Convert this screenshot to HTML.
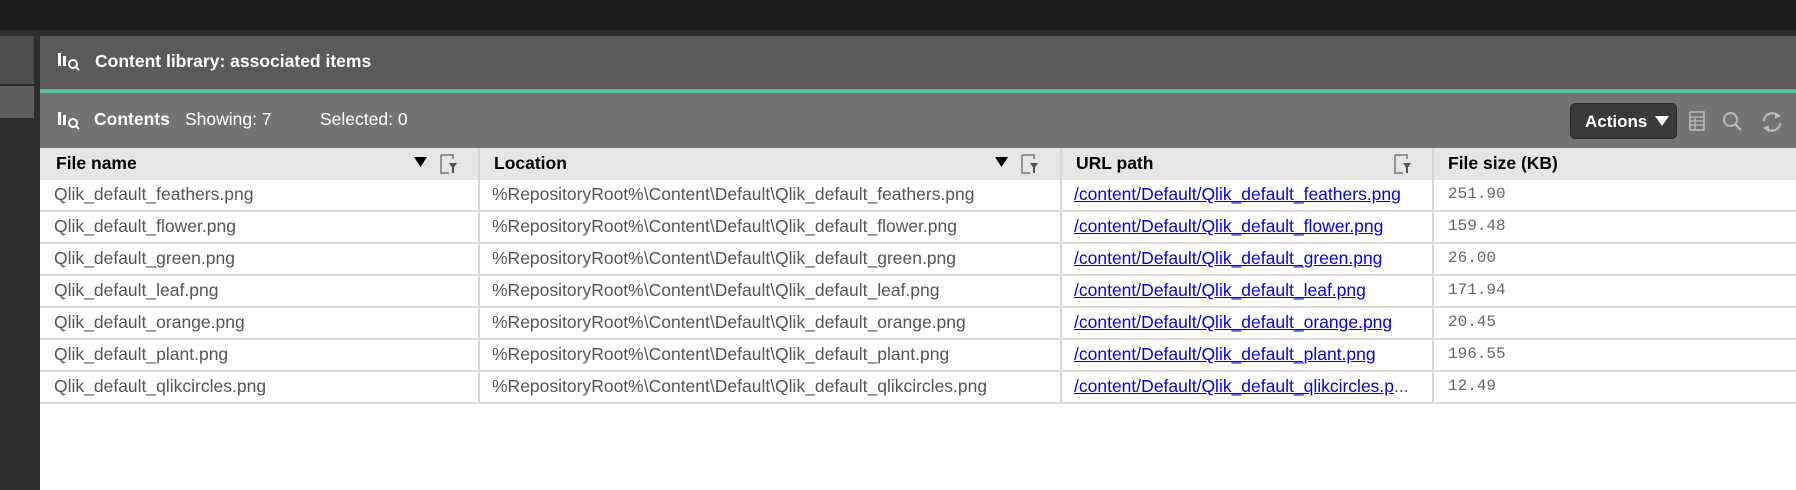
<!DOCTYPE html>
<html><head><style>
*{margin:0;padding:0;box-sizing:border-box}
body{width:1796px;height:490px;overflow:hidden;background:#2e2e2e;font-family:"Liberation Sans",sans-serif;position:relative}
.top{position:absolute;left:0;top:0;width:1796px;height:30px;background:#1b1b1b}
.lb1{position:absolute;left:0;top:36px;width:34px;height:48px;background:#4e4e4e}
.lb2{position:absolute;left:0;top:86px;width:34px;height:32px;background:#5e5e5e}
.main{position:absolute;left:40px;top:36px;width:1756px;height:454px;background:#fff}
.h1{position:absolute;left:0;top:0;width:100%;height:53px;background:#5a5a5a;color:#fff;font-weight:bold;font-size:17.5px}
.teal{position:absolute;left:0;top:53px;width:100%;height:4px;background:#5fbf9f}
.h2{position:absolute;left:0;top:57px;width:100%;height:55px;background:#737373;color:#fff;font-size:17.5px}
.ico{position:absolute}
.t{position:absolute;white-space:nowrap}
.thead{position:absolute;left:0;top:112px;width:100%;height:32px;background:#e6e6e6}
.col{position:absolute;top:112px;bottom:0;width:2px;background:#d8d8d8}
.row{position:absolute;left:0;width:100%;height:32px;border-bottom:2px solid #dcdcdc}
.c{position:absolute;top:4px;font-size:17.5px;color:#555;white-space:nowrap}
a{color:#0000ee;text-decoration:underline}
.mono{font-family:"Liberation Mono",monospace;font-size:16px;top:5px;color:#666}
.hd{position:absolute;top:5px;font-weight:bold;font-size:17.5px;color:#000}
.fi{position:absolute;top:6px;width:18px;height:20px}
.act{position:absolute;left:1530px;top:67px;width:107px;height:36px;background:#3a3a3a;border:1px solid #2a2a2a;border-radius:5px;color:#fff;font-weight:bold;font-size:17px}
</style></head><body>
<div class="top"></div>
<div class="lb1"></div><div class="lb2"></div>
<div class="main">
 <div class="h1">
  <svg class="ico" style="left:17px;top:15px" width="24" height="20"><rect x="1" y="2" width="3" height="13" fill="#fff"/><rect x="6" y="5" width="3" height="10" fill="#fff"/><circle cx="16" cy="13" r="4" fill="none" stroke="#fff" stroke-width="2"/><line x1="19" y1="16" x2="22" y2="19" stroke="#fff" stroke-width="2"/></svg>
  <div class="t" style="left:55px;top:15px">Content library: associated items</div>
 </div>
 <div class="teal"></div>
 <div class="h2">
  <svg class="ico" style="left:17px;top:17px" width="24" height="20"><rect x="1" y="2" width="3" height="13" fill="#fff"/><rect x="6" y="5" width="3" height="10" fill="#fff"/><circle cx="16" cy="13" r="4" fill="none" stroke="#fff" stroke-width="2"/><line x1="19" y1="16" x2="22" y2="19" stroke="#fff" stroke-width="2"/></svg>
  <div class="t" style="left:54px;top:16px;font-weight:bold">Contents</div>
  <div class="t" style="left:145px;top:16px">Showing: 7</div>
  <div class="t" style="left:280px;top:16px">Selected: 0</div>
 </div>
 <div class="act"><span style="position:absolute;left:14px;top:8px">Actions</span><svg style="position:absolute;left:84px;top:12px" width="14" height="11"><path d="M0 0H14L7 10Z" fill="#fff"/></svg></div>
 <svg class="ico" style="left:1649px;top:75px" width="16" height="20"><rect x="1" y="1" width="14" height="18" fill="none" stroke="#bbb" stroke-width="1.5"/><path d="M1 6H15M1 10H15M1 14H15M6 6V19" stroke="#bbb" stroke-width="1.3"/></svg>
 <svg class="ico" style="left:1682px;top:75px" width="22" height="22"><circle cx="8.5" cy="8.5" r="6.5" fill="none" stroke="#bbb" stroke-width="2"/><line x1="13" y1="13" x2="19" y2="19" stroke="#bbb" stroke-width="2.4"/></svg>
 <svg class="ico" style="left:1720px;top:74px" width="24" height="24"><path d="M4 11A8 8 0 0 1 18 6M20 13A8 8 0 0 1 6 18" fill="none" stroke="#bbb" stroke-width="2.2"/><path d="M15 2L21 6L15 9Z M9 15L3 18L9 22Z" fill="#bbb"/></svg>
 <div class="thead">
  <div class="hd" style="left:16px">File name</div>
  <svg style="position:absolute;left:374px;top:9px" width="13" height="10"><path d="M0 0H13L6.5 10Z" fill="#000"/></svg>
  <svg class="fi" style="left:400px"><path d="M1 1H13V5M1 1V19H9" fill="none" stroke="#777" stroke-width="1.5"/><path d="M9 9H17L13 15Z" fill="#555"/><rect x="12" y="13" width="2" height="6" fill="#555"/></svg>
  <div class="hd" style="left:454px">Location</div>
  <svg style="position:absolute;left:955px;top:9px" width="13" height="10"><path d="M0 0H13L6.5 10Z" fill="#000"/></svg>
  <svg class="fi" style="left:981px"><path d="M1 1H13V5M1 1V19H9" fill="none" stroke="#777" stroke-width="1.5"/><path d="M9 9H17L13 15Z" fill="#555"/><rect x="12" y="13" width="2" height="6" fill="#555"/></svg>
  <div class="hd" style="left:1036px">URL path</div>
  <svg class="fi" style="left:1354px"><path d="M1 1H13V5M1 1V19H9" fill="none" stroke="#777" stroke-width="1.5"/><path d="M9 9H17L13 15Z" fill="#555"/><rect x="12" y="13" width="2" height="6" fill="#555"/></svg>
  <div class="hd" style="left:1408px">File size (KB)</div>
 </div>
 <div class="row" style="top:144px"><span class="c" style="left:14px">Qlik_default_feathers.png</span><span class="c" style="left:452px">%RepositoryRoot%\Content\Default\Qlik_default_feathers.png</span><span class="c" style="left:1034px"><a>/content/Default/Qlik_default_feathers.png</a></span><span class="c mono" style="left:1408px">251.90</span></div>
 <div class="row" style="top:176px"><span class="c" style="left:14px">Qlik_default_flower.png</span><span class="c" style="left:452px">%RepositoryRoot%\Content\Default\Qlik_default_flower.png</span><span class="c" style="left:1034px"><a>/content/Default/Qlik_default_flower.png</a></span><span class="c mono" style="left:1408px">159.48</span></div>
 <div class="row" style="top:208px"><span class="c" style="left:14px">Qlik_default_green.png</span><span class="c" style="left:452px">%RepositoryRoot%\Content\Default\Qlik_default_green.png</span><span class="c" style="left:1034px"><a>/content/Default/Qlik_default_green.png</a></span><span class="c mono" style="left:1408px">26.00</span></div>
 <div class="row" style="top:240px"><span class="c" style="left:14px">Qlik_default_leaf.png</span><span class="c" style="left:452px">%RepositoryRoot%\Content\Default\Qlik_default_leaf.png</span><span class="c" style="left:1034px"><a>/content/Default/Qlik_default_leaf.png</a></span><span class="c mono" style="left:1408px">171.94</span></div>
 <div class="row" style="top:272px"><span class="c" style="left:14px">Qlik_default_orange.png</span><span class="c" style="left:452px">%RepositoryRoot%\Content\Default\Qlik_default_orange.png</span><span class="c" style="left:1034px"><a>/content/Default/Qlik_default_orange.png</a></span><span class="c mono" style="left:1408px">20.45</span></div>
 <div class="row" style="top:304px"><span class="c" style="left:14px">Qlik_default_plant.png</span><span class="c" style="left:452px">%RepositoryRoot%\Content\Default\Qlik_default_plant.png</span><span class="c" style="left:1034px"><a>/content/Default/Qlik_default_plant.png</a></span><span class="c mono" style="left:1408px">196.55</span></div>
 <div class="row" style="top:336px"><span class="c" style="left:14px">Qlik_default_qlikcircles.png</span><span class="c" style="left:452px">%RepositoryRoot%\Content\Default\Qlik_default_qlikcircles.png</span><span class="c" style="left:1034px"><a>/content/Default/Qlik_default_qlikcircles.p</a>...</span><span class="c mono" style="left:1408px">12.49</span></div>
 <div class="col" style="left:438px;height:256px"></div>
 <div class="col" style="left:1020px;height:256px"></div>
 <div class="col" style="left:1392px;height:256px"></div>
</div>
</body></html>
